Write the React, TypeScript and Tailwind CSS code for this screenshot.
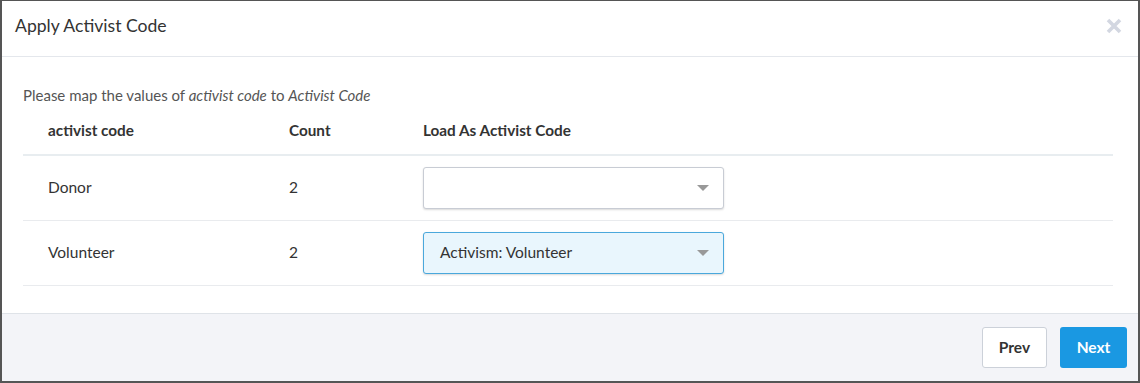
const rows = [
  { code: 'Donor', count: 2, value: '' },
  { code: 'Volunteer', count: 2, value: 'Activism: Volunteer' },
];

function Caret() {
  return (
    <svg width="12" height="6" viewBox="0 0 12 6" aria-hidden>
      <path d="M0 0h12L6 6z" fill="#999" />
    </svg>
  );
}

function CloseIcon() {
  return (
    <svg width="16" height="16" viewBox="0 0 16 16" aria-hidden>
      <path d="M2 2l12 12M14 2L2 14" stroke="#d3d7e1" strokeWidth="3.6" strokeLinecap="butt" />
    </svg>
  );
}

function Select({ value }: { value: string }) {
  const filled = value !== '';
  return (
    <div
      className={
        'flex h-[42px] w-[301px] items-center justify-between rounded-[3px] border pl-4 pr-[14px] text-[15.5px] text-[#333] shadow-[0_1px_2px_rgba(0,0,0,0.15)] ' +
        (filled ? 'border-[#4aa8dc] bg-[#e9f6fd]' : 'border-[#c8ccd4] bg-white')
      }
    >
      <span>{value}</span>
      <Caret />
    </div>
  );
}

export default function App() {
  return (
    <div className="flex h-[383px] w-[1140px] flex-col border-2 border-t border-[#555] bg-white font-['Lato','Noto_Sans',sans-serif] text-[#333]">
      <div className="flex h-[56px] shrink-0 items-center justify-between border-b border-[#e4e7ec] pb-[5px] pl-[13px] pr-[16px]">
        <h2 className="text-[17.6px] font-normal text-[#333]">Apply Activist Code</h2>
        <CloseIcon />
      </div>

      <div className="flex-1 px-[21px] pt-[28px]">
        <p className="text-[15px] leading-[20px] text-[#555]">
          Please map the values of <em>activist code</em> to <em>Activist Code</em>
        </p>
        <div className="mr-[4px]">
          <div className="flex h-[51px] items-center border-b-2 border-[#e8edf0] pt-[1px] text-[15.3px] font-bold text-[#333]">
            <span className="w-[266px] pl-[25px]">activist code</span>
            <span className="w-[134px]">Count</span>
            <span>Load As Activist Code</span>
          </div>
          {rows.map((r) => (
            <div key={r.code} className="flex h-[65px] items-center border-b border-[#e9ebee] text-[15.5px] text-[#333]">
              <span className="w-[266px] pl-[25px]">{r.code}</span>
              <span className="w-[134px]">{r.count}</span>
              <Select value={r.value} />
            </div>
          ))}
        </div>
      </div>

      <div className="flex h-[68px] shrink-0 items-center justify-end gap-[13px] border-t border-[#dfe3e8] bg-[#f3f4f8] pr-[11px]">
        <button className="h-[41px] w-[65px] rounded-[3px] border border-[#ccd1d9] bg-white text-[15.5px] font-bold text-[#333]">
          Prev
        </button>
        <button className="h-[41px] w-[67px] rounded-[3px] bg-[#1a98e2] text-[15.5px] font-bold text-white">
          Next
        </button>
      </div>
    </div>
  );
}
